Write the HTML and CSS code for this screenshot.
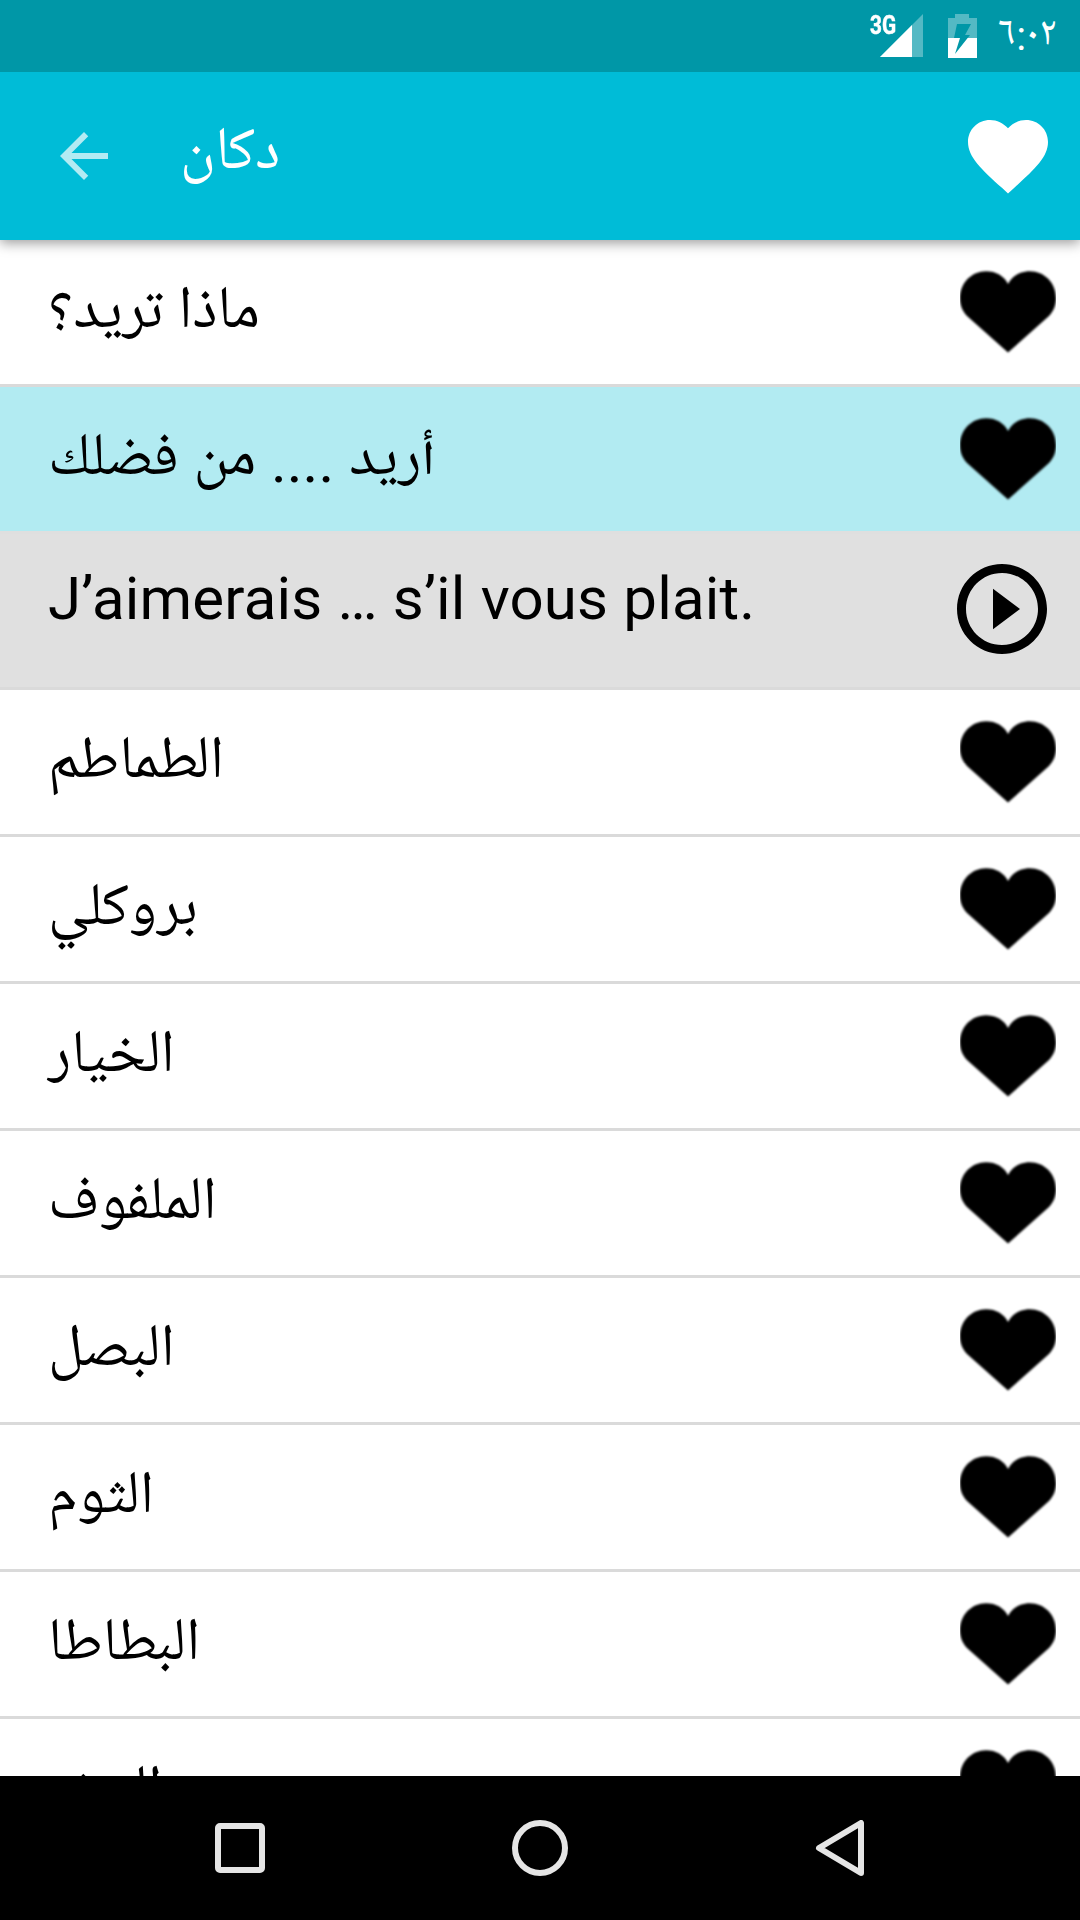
FILE: index.html
```html
<!DOCTYPE html>
<html lang="ar">
<head>
<meta charset="utf-8">
<title>دكان</title>
<link rel="stylesheet" href="styles.css">
</head>
<body>
<svg class="defs" aria-hidden="true">
  <symbol id="heart" viewBox="0 0 96 96"><path d="M48 88.500 7 52C2 46.500 0 40.500 0 34.500 0 18.500 12 7.300 26 7.300 36 7.300 44 12 48 20 52 12 60 7.300 70 7.300 84 7.300 96 18.500 96 34.500 96 40.500 94 46.500 89 52Z"/></symbol>
</svg>
<div class="screen">
  <div class="status">
    <div class="signal">
      <span class="net">3G</span>
      <svg width="43" height="43" viewBox="0 0 43 43"><path d="M0 43 43 0V43Z" fill="#fff" opacity=".33"/><path d="M0 43 32 11V43Z" fill="#fff"/></svg>
    </div>
    <svg class="battery" width="29" height="44" viewBox="0 0 29 44"><path d="M7 0H21V4H29V24H0V4H7Z" fill="#fff" opacity=".33"/><path d="M0 24H29V44H0Z" fill="#fff"/><path d="M9 10H23L17 21H22L7 40 12 24H6Z" fill="#0097a7"/></svg>
    <span class="time">٦:٠٢</span>
  </div>
  <header class="appbar">
    <svg class="back" width="72" height="72" viewBox="0 0 24 24"><path d="M20 11H7.830l5.590-5.590L12 4l-8 8 8 8 1.410-1.410L7.830 13H20v-2z"/></svg>
    <h1 class="title">دكان</h1>
    <svg class="fav" width="96" height="96" viewBox="0 0 24 24"><path d="M12 21.350l-1.450-1.320C5.400 15.360 2 12.280 2 8.500 2 5.420 4.420 3 7.500 3c1.740 0 3.410.810 4.500 2.090C13.090 3.810 14.760 3 16.500 3 19.580 3 22 5.420 22 8.500c0 3.780-3.400 6.860-8.550 11.540L12 21.350z"/></svg>
  </header>
  <main class="list">
    <div class="row"><span class="label" dir="rtl">ماذا تريد؟</span><svg class="heart"><use href="#heart"/></svg></div>
    <div class="row selected"><span class="label" dir="rtl">أريد .... من فضلك</span><svg class="heart"><use href="#heart"/></svg></div>
    <div class="row detail"><span class="label" lang="fr">J’aimerais … s’il vous plait.</span><svg class="play" width="108" height="108" viewBox="0 0 24 24"><path d="M10 16.500l6-4.500-6-4.500v9zM12 2C6.480 2 2 6.480 2 12s4.480 10 10 10 10-4.480 10-10S17.520 2 12 2zm0 18c-4.410 0-8-3.590-8-8s3.590-8 8-8 8 3.590 8 8-3.590 8-8 8z"/></svg></div>
    <div class="row"><span class="label">الطماطم</span><svg class="heart"><use href="#heart"/></svg></div>
    <div class="row"><span class="label">بروكلي</span><svg class="heart"><use href="#heart"/></svg></div>
    <div class="row"><span class="label">الخيار</span><svg class="heart"><use href="#heart"/></svg></div>
    <div class="row"><span class="label">الملفوف</span><svg class="heart"><use href="#heart"/></svg></div>
    <div class="row"><span class="label">البصل</span><svg class="heart"><use href="#heart"/></svg></div>
    <div class="row"><span class="label">الثوم</span><svg class="heart"><use href="#heart"/></svg></div>
    <div class="row"><span class="label">البطاطا</span><svg class="heart"><use href="#heart"/></svg></div>
    <div class="row"><span class="label">الجزر</span><svg class="heart"><use href="#heart"/></svg></div>
  </main>
  <nav class="navbar">
    <svg width="56" height="56" viewBox="0 0 56 56"><rect x="6" y="6" width="44" height="44" rx="2"/></svg>
    <svg width="56" height="56" viewBox="0 0 56 56"><circle cx="28" cy="28" r="25"/></svg>
    <svg width="56" height="56" viewBox="0 0 56 56"><path d="M49 3V53L7 28Z"/></svg>
  </nav>
</div>
</body>
</html>
```
FILE: styles.css
```css
* { box-sizing: border-box; }
body {
  margin: 0;
  font-family: Roboto, "Noto Naskh Arabic UI", "Noto Naskh Arabic", sans-serif;
  color: #000;
}
svg { display: block; flex: none; }
.defs { display: none; }
.screen {
  width: 1080px;
  height: 1920px;
  display: flex;
  flex-direction: column;
  overflow: hidden;
  background: #fff;
}
.status {
  flex: none;
  height: 72px;
  padding: 0 24px 0 869px;
  display: flex;
  background: #0097a7;
  color: #fff;
  position: relative;
  z-index: 2;
}
.signal {
  width: 54px;
  padding: 14px 0 0 11px;
  position: relative;
}
.net {
  position: absolute;
  left: 1px;
  top: 12px;
  font: 700 26px/26px Roboto, sans-serif;
  -webkit-text-stroke: .5px #fff;
  transform: scaleX(.8);
  transform-origin: 0 0;
}
.battery { margin: 14px 0 0 25px; }
.time {
  margin-left: auto;
  font-size: 41px;
  line-height: 73px;
  white-space: nowrap;
}
.appbar {
  flex: none;
  height: 168px;
  padding: 0 24px 0 48px;
  display: flex;
  align-items: center;
  background: #00bcd7;
  color: #fff;
  fill: #fff;
  box-shadow: 0 3px 12px rgba(0, 0, 0, .4);
  position: relative;
}
.back { opacity: .7; }
.title {
  margin: 0 auto 0 60px;
  font-size: 60px;
  font-weight: 400;
  line-height: 168px;
}
.list { flex: 1; min-height: 0; overflow: hidden; }
.row {
  height: 147px;
  padding: 0 24px 0 48px;
  display: flex;
  align-items: center;
  justify-content: space-between;
  border-bottom: 3px solid #dadada;
}
.label {
  padding-top: 5px;
  font-size: 60px;
  line-height: 144px;
  height: 149px;
  white-space: nowrap;
}
.heart {
  width: 96px;
  height: 96px;
  filter: blur(.8px);
  clip-path: inset(0);
}
.selected { background: #b2ebf2; border-bottom-color: #dfdfdf; }
.detail {
  height: 156px;
  padding-bottom: 3px;
  align-items: flex-start;
  background: #e0e0e0;
}
.detail .label {
  padding-top: 0;
  line-height: 130px;
  letter-spacing: .17px;
}
.play { margin-top: 21px; }
.navbar {
  flex: none;
  height: 144px;
  padding: 0 212px;
  display: flex;
  align-items: center;
  justify-content: space-between;
  background: #000;
  fill: none;
  stroke: #e5e5e5;
  stroke-width: 6;
  stroke-linejoin: round;
}
```
